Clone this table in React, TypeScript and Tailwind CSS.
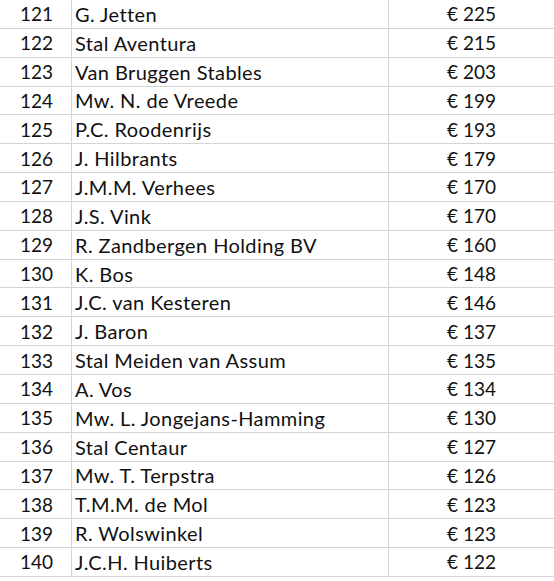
import React from 'react';

const ROWS: [number, string, number][] = [
  [121, 'G. Jetten', 225],
  [122, 'Stal Aventura', 215],
  [123, 'Van Bruggen Stables', 203],
  [124, 'Mw. N. de Vreede', 199],
  [125, 'P.C. Roodenrijs', 193],
  [126, 'J. Hilbrants', 179],
  [127, 'J.M.M. Verhees', 170],
  [128, 'J.S. Vink', 170],
  [129, 'R. Zandbergen Holding BV', 160],
  [130, 'K. Bos', 148],
  [131, 'J.C. van Kesteren', 146],
  [132, 'J. Baron', 137],
  [133, 'Stal Meiden van Assum', 135],
  [134, 'A. Vos', 134],
  [135, 'Mw. L. Jongejans-Hamming', 130],
  [136, 'Stal Centaur', 127],
  [137, 'Mw. T. Terpstra', 126],
  [138, 'T.M.M. de Mol', 123],
  [139, 'R. Wolswinkel', 123],
  [140, 'J.C.H. Huiberts', 122],
];

export default function App() {
  return (
    <div
      className="w-[554px] h-[581px] overflow-hidden bg-white text-[#111] text-[19px]"
      style={{ fontFamily: 'Lato, "Open Sans", sans-serif' }}
    >
      {ROWS.map(([n, name, amount]) => (
        <div key={n} className="flex h-[28.85px] border-b border-[#d4d4d4] leading-none">
          <div className="w-[72px] shrink-0 border-r border-[#d4d4d4] flex items-center pl-[20px]">
            {n}
          </div>
          <div className="w-[317px] shrink-0 border-r border-[#d4d4d4] flex items-center pl-[3px] whitespace-nowrap text-[20px] tracking-[0.4px]">
            {name}
          </div>
          <div className="flex-1 flex items-center pl-[58px] whitespace-nowrap">€ {amount}</div>
        </div>
      ))}
    </div>
  );
}
